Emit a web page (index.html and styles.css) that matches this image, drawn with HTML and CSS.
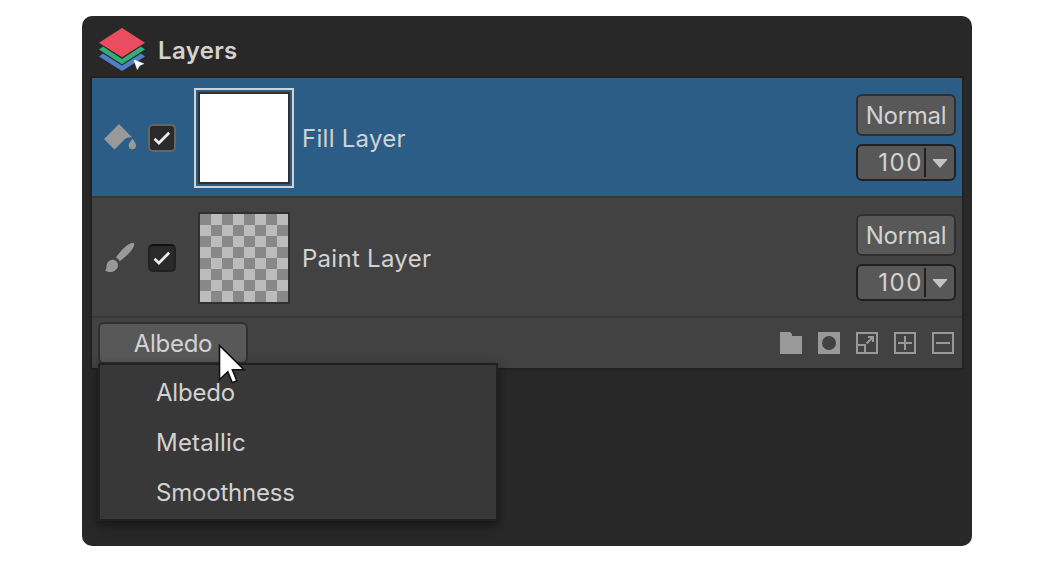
FILE: index.html
```html
<!DOCTYPE html>
<html lang="en">
<head>
<meta charset="utf-8">
<title>Layers</title>
<link rel="stylesheet" href="styles.css">
</head>
<body>
<main class="panel">
  <header class="header">
    <svg class="logo" width="46" height="44" viewBox="0 0 46 44">
      <path fill="#4f7fc6" d="M0 28.500 4 25.500 23 37.500 42 25.500 46 28.500 23 43Z"/>
      <path fill="#30b077" d="M0 21.500 4 18.500 23 31 42 18.500 46 21.500 23 36.300Z"/>
      <path fill="#eb4d60" d="M23 0 46 14.700 23 29.300 0 14.700Z"/>
      <path fill="#fff" stroke="#fff" stroke-width=".6" d="M35 32 44.700 35.700 40.700 37.500 38.300 41.500Z"/>
    </svg>
    <h1 class="title">Layers</h1>
  </header>
  <section class="list">
    <div class="layer selected">
      <svg class="kind" width="34" height="28" viewBox="1 0 34 28">
        <path fill="#999" d="M1 15 16 0 29 13.300C26 13 23.500 13.600 21.500 15.500L11.500 25.500Z"/>
        <path fill="#999" d="M29.300 14.500C31 17.500 33 19 33 21.500A3.600 3.600 0 0 1 25.600 21.500C25.600 19 27.700 17.500 29.300 14.500Z"/>
      </svg>
      <span class="check"><svg width="28" height="28" viewBox="0 0 28 28"><path d="M6.500 14.800 10.900 19 21.200 8.700"/></svg></span>
      <span class="frame"><span class="thumb"></span></span>
      <span class="name">Fill Layer</span>
      <div class="controls">
        <button class="blend">Normal</button>
        <div class="opacity"><span class="value">100</span><span class="arrow"><svg width="14" height="9" viewBox="0 0 14 9"><path fill="#c4c4c4" d="M0 0H14V1L7 9 0 1Z"/></svg></span></div>
      </div>
    </div>
    <div class="layer">
      <svg class="kind" width="34" height="32" viewBox="0 0 34 32">
        <path fill="#999" d="M11.800 15.400C17 8.500 23 2 28.200 1Q30.500.300 30.200 2.700C29 8.500 22 14.500 15.800 19.200Q14.500 16.300 11.800 15.400Z"/>
        <path fill="#999" d="M1 28.500C3.200 27 1.800 24.500 3.200 21.500C4.500 18.500 7.500 17.300 10 18C13 19 14.700 22 13.700 25C12.500 29.200 6.500 32 1 28.500Z"/>
      </svg>
      <span class="check"><svg width="28" height="28" viewBox="0 0 28 28"><path d="M6.500 14.800 10.900 19 21.200 8.700"/></svg></span>
      <span class="frame"><span class="thumb checker"></span></span>
      <span class="name">Paint Layer</span>
      <div class="controls">
        <button class="blend">Normal</button>
        <div class="opacity"><span class="value">100</span><span class="arrow"><svg width="14" height="9" viewBox="0 0 14 9"><path fill="#c4c4c4" d="M0 0H14V1L7 9 0 1Z"/></svg></span></div>
      </div>
    </div>
    <footer class="footer">
      <div class="channel">
        <button class="channel-button">Albedo</button>
        <ul class="menu">
          <li>Albedo</li>
          <li class="loose">Metallic</li>
          <li>Smoothness</li>
        </ul>
        <svg class="pointer" width="28" height="42" viewBox="0 0 28 42"><path fill="#fff" stroke="#111" stroke-width="1.600" d="M1.500 1.500V35.500L9.800 27.800 14.300 38.800 18.800 36.800 14.400 25.800H26Z"/></svg>
      </div>
      <div class="tools">
        <svg width="22" height="22" viewBox="0 0 22 22"><path fill="#999" d="M0 0H10L12 2V4H22V22H0Z"/></svg>
        <svg width="22" height="22" viewBox="0 0 22 22"><path fill="#999" fill-rule="evenodd" d="M0 0H22V22H0ZM11 4A7 7 0 0 0 11 18A7 7 0 0 0 11 4Z"/></svg>
        <svg width="22" height="22" viewBox="0 0 22 22"><g fill="none" stroke="#999" stroke-width="2"><path d="M1 1H21V21H1ZM1 13H9V21M10.500 11.500 16 6"/></g><path fill="#999" d="M12 4H18V10H16V8L14 6H12Z"/></svg>
        <svg width="22" height="22" viewBox="0 0 22 22"><path fill="none" stroke="#999" stroke-width="2" d="M1 1H21V21H1ZM4 11H18M11 4V18"/></svg>
        <svg width="22" height="22" viewBox="0 0 22 22"><path fill="none" stroke="#999" stroke-width="2" d="M1 1H21V21H1ZM4 11H18"/></svg>
      </div>
    </footer>
  </section>
</main>
</body>
</html>
```
FILE: styles.css
```css
* { box-sizing: border-box; }
body {
  margin: 0;
  padding: 16px 81px 16px 82px;
  background: #fff;
  font: 370 24px/30px Inter, sans-serif;
  color: #d2d2d2;
}
svg { display: block; }
button { font: inherit; color: inherit; padding: 0; letter-spacing: -.3px; }
.panel {
  width: 890px;
  height: 530px;
  padding: 0 8px;
  border-radius: 10px;
  background: #282828;
}
.header {
  display: flex;
  align-items: flex-start;
  height: 60px;
  padding: 12px 0 0 9px;
}
.title {
  margin: 8px 0 0 13px;
  font-size: 24px;
  line-height: 30px;
  font-weight: 600;
  letter-spacing: .35px;
}
.list {
  width: 874px;
  border: 2px solid #212121;
  background: #424242;
}
.layer {
  display: flex;
  align-items: center;
  height: 120px;
  padding: 0 6px 0 12px;
  box-shadow: inset 0 -2px #383838;
}
.layer.selected { background: #2c5d87; }
.kind { margin-right: 10px; }
.check {
  width: 28px;
  height: 28px;
  border: 2px solid #212121;
  border-top-color: #111;
  border-radius: 5px;
  background: #2a2a2a;
}
.check svg { margin: -2px; }
.check path { fill: none; stroke: #eee; stroke-width: 2.700; }
.selected .check { border-color: #656565; }
.frame {
  margin-left: 18px;
  padding: 2px;
  border: 2px solid transparent;
}
.selected .frame { border-color: #d2d2d2; }
.thumb {
  display: block;
  width: 92px;
  height: 92px;
  border: 2px solid #303030;
  background: #fff;
}
.thumb.checker {
  background: repeating-conic-gradient(#bcbcbc 0 25%, #888 0 50%) padding-box 0 0 / 22px 22px;
}
.name { margin-left: 8px; padding-top: 2px; letter-spacing: .28px; }
.controls {
  display: flex;
  flex-direction: column;
  gap: 8px;
  width: 100px;
  height: 88px;
  margin-left: auto;
}
.blend {
  height: 42px;
  padding-top: 2px;
  border: 2px solid #303030;
  border-radius: 6px;
  background: #585858;
}
.opacity {
  display: flex;
  align-items: center;
  height: 37px;
  border: 2px solid #202020;
  border-radius: 6px;
  background: #585858;
}
.value {
  width: 68px;
  height: 29px;
  padding-right: 1px;
  border-right: 2px solid #202020;
  line-height: 30px;
  text-align: right;
  letter-spacing: 1.6px;
}
.arrow { margin: 1px 0 0 7px; }
.footer {
  display: flex;
  justify-content: space-between;
  height: 50px;
  padding: 4px 8px 0 6px;
}
.channel { position: relative; }
.channel-button {
  display: block;
  width: 150px;
  height: 42px;
  padding-top: 2px;
  border: 2px solid #303030;
  border-radius: 6px;
  background: #585858;
}
.menu {
  position: absolute;
  top: 41px;
  left: 0;
  width: 400px;
  height: 158px;
  margin: 0;
  padding: 3px 0 0 56px;
  list-style: none;
  border: 2px solid #212121;
  background: #383838;
  box-shadow: 0 4px 10px rgba(0, 0, 0, .5);
}
.menu li { line-height: 50px; letter-spacing: -.2px; }
.menu .loose { letter-spacing: .22px; }
.pointer { position: absolute; left: 120px; top: 22px; }
.tools { display: flex; gap: 16px; padding-top: 10px; }
```
